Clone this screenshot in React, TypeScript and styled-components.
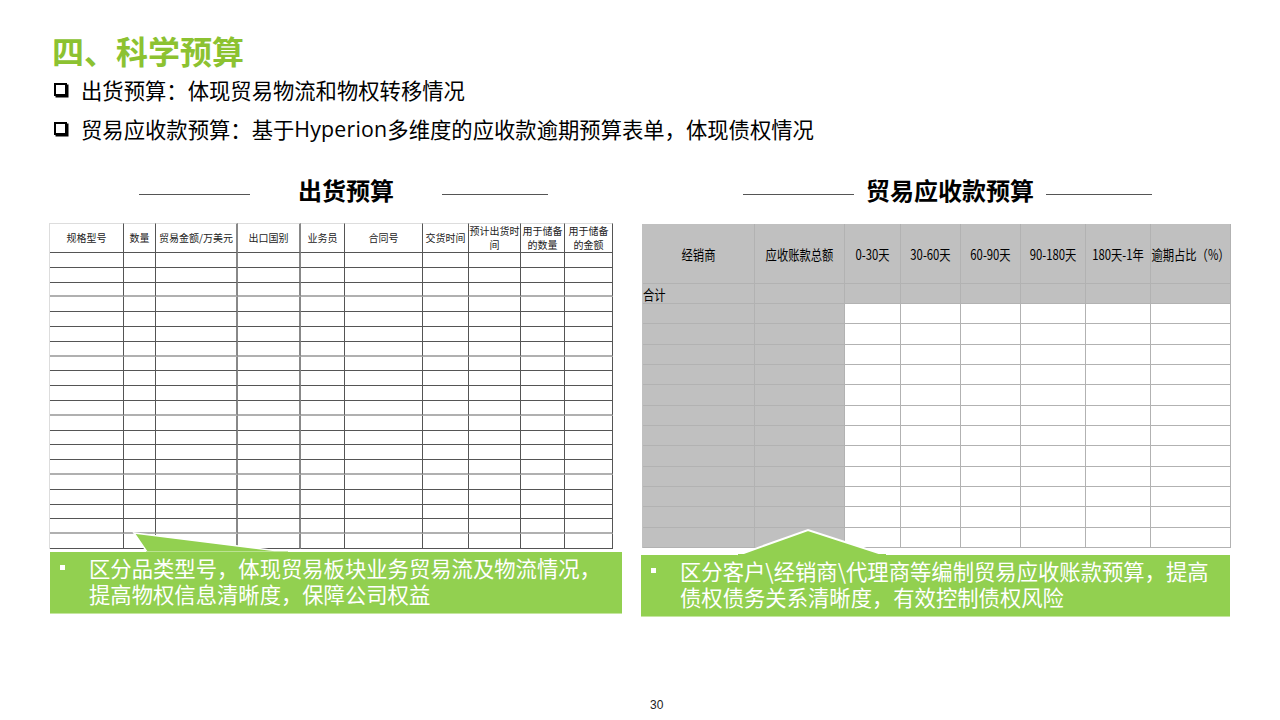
import React, { ReactElement } from 'react';
import styled, { createGlobalStyle } from 'styled-components';

const GlobalStyle = createGlobalStyle`
  html, body { margin: 0; padding: 0; background: #fff; }
  body { font-family: "Noto Sans CJK SC", "Liberation Sans", sans-serif; }
`;

const Slide = styled.div`
  width: 1280px;
  height: 720px;
  overflow: hidden;
  display: flex;
  flex-direction: column;
  padding: 30px 0 0 0;
  box-sizing: border-box;
`;

const Title = styled.h1`
  margin: 0 0 0 52px;
  height: 40px;
  font-size: 32px;
  line-height: 40px;
  font-weight: 700;
  color: #8cc231;
`;

const BulletList = styled.ul`
  list-style: none;
  margin: 0 0 0 54px;
  padding: 0;
`;

const BulletItem = styled.li`
  display: flex;
  align-items: center;
  height: 39px;
  line-height: 30px;
  font-size: 21.33px;
  color: #000;
  white-space: nowrap;
`;

const Latin = styled.span`
  font-family: "Open Sans", "Liberation Sans", sans-serif;
  letter-spacing: 0.2px;
`;

const BulletBox = styled.span`
  width: 9px;
  height: 9px;
  border: 2px solid #000;
  box-shadow: 1.5px 1.5px 0 #000;
  margin-right: 14px;
  flex: none;
`;

const Panels = styled.div`
  display: flex;
  margin-top: 17px;
`;

const Panel = styled.section<{ $left: number; $width: number }>`
  margin-left: ${p => p.$left}px;
  width: ${p => p.$width}px;
  flex: none;
`;

const PanelHead = styled.div<{ $pad: number; $after: number }>`
  display: flex;
  align-items: center;
  height: 50px;
  padding-left: ${p => p.$pad}px;
  margin-bottom: ${p => p.$after}px;
`;

const HeadLine = styled.span<{ $w: number }>`
  width: ${p => p.$w}px;
  height: 1px;
  background: #555;
  flex: none;
  margin-top: 9px;
`;

const HeadText = styled.h2<{ $w: number }>`
  margin: 0;
  width: ${p => p.$w}px;
  flex: none;
  text-align: center;
  font-size: 24px;
  line-height: 32px;
  font-weight: 700;
  color: #000;
`;

const Sheet = styled.div<{ $cols: string; $rows: string; $line: string }>`
  display: grid;
  grid-template-columns: ${p => p.$cols};
  grid-template-rows: ${p => p.$rows};
  border-left: 1px solid ${p => p.$line};
`;

const ShipCell = styled.div<{ $soft?: boolean; $head?: boolean; $wideRight?: boolean }>`
  border-right: ${p => (p.$wideRight ? '2px solid #888' : '1px solid #555')};
  border-bottom: ${p => (p.$soft ? '2px solid #b0b0b0' : '1px solid #555')};
  border-top: ${p => (p.$head ? '1px solid #ddd' : 'none')};
  display: flex;
  align-items: center;
  justify-content: center;
  text-align: center;
  font-size: 10px;
  line-height: 14px;
  color: #222;
  box-sizing: border-box;
  min-width: 0;
  min-height: 0;
`;

const DebtCell = styled.div<{ $grey?: boolean; $start?: boolean }>`
  background: ${p => (p.$grey ? '#c0c0c0' : '#fff')};
  border-right: 1px solid #b2b2b2;
  border-bottom: 1px solid #b2b2b2;
  display: flex;
  align-items: center;
  justify-content: ${p => (p.$start ? 'flex-start' : 'center')};
  font-size: 11.3px;
  color: #000;
  white-space: nowrap;
  box-sizing: border-box;
  min-width: 0;
  min-height: 0;
`;

const DebtLabel = styled.span`
  display: inline-block;
  transform: scaleY(1.25);
`;

const Callout = styled.div<{ $top: number; $left: number; $width: number }>`
  position: relative;
  margin-top: ${p => p.$top}px;
  margin-left: ${p => p.$left}px;
  width: ${p => p.$width}px;
  height: 62px;
  box-sizing: border-box;
  padding: 3px 8px 0 39px;
  background: #92d050;
  border-bottom: 1px solid #c5e6a0;
  color: #fff;
  font-size: 21.33px;
  line-height: 26px;
`;

const CalloutDot = styled.span`
  position: absolute;
  left: 10px;
  top: 13px;
  width: 5px;
  height: 5px;
  background: #fff;
`;

const Pointer = styled.svg<{ $x: number; $y: number }>`
  position: absolute;
  left: ${p => p.$x}px;
  top: ${p => p.$y}px;
  overflow: visible;
`;

const PageNo = styled.div`
  position: absolute;
  left: 650px;
  top: 697px;
  font-family: "Liberation Sans", sans-serif;
  font-size: 12px;
  line-height: 16px;
  color: #222;
`;

const shipHeads = ['规格型号', '数量', '贸易金额/万美元', '出口国别', '业务员', '合同号', '交货时间', '预计出货时间', '用于储备的数量', '用于储备的金额'];
const shipCols = '74px 32px 82px 63px 44px 78px 46px 52px 44px 48px';
const debtHeads = ['经销商', '应收账款总额', '0-30天', '30-60天', '60-90天', '90-180天', '180天-1年', '逾期占比（%）'];
const debtCols = '112px 90px 56px 60px 60px 65px 65px 80px';

const softRows = [2, 6, 10, 14, 18];

const App = (): ReactElement => {
  return (
    <>
      <GlobalStyle />
      <Slide>
        <Title>四、科学预算</Title>
        <BulletList>
          <BulletItem><BulletBox />出货预算：体现贸易物流和物权转移情况</BulletItem>
          <BulletItem><BulletBox />贸易应收款预算：基于<Latin>Hyperion</Latin>多维度的应收款逾期预算表单，体现债权情况</BulletItem>
        </BulletList>
        <Panels>
          <Panel $left={49} $width={574}>
            <PanelHead $pad={90} $after={8}>
              <HeadLine $w={111} />
              <HeadText $w={192}>出货预算</HeadText>
              <HeadLine $w={106} />
            </PanelHead>
            <Sheet $cols={shipCols} $rows="30px repeat(20, 14.8px)" $line="#ddd">
              {shipHeads.map((h, i) => <ShipCell key={h} $head $wideRight={i === 2 || i === 3}>{h}</ShipCell>)}
              {Array.from({ length: 20 }).flatMap((_, r) =>
                shipHeads.map((h, i) => (
                  <ShipCell key={`${r}-${h}`} $soft={softRows.includes(r)} $wideRight={i === 2 || i === 3} />
                ))
              )}
            </Sheet>
            <Callout $top={3} $left={1} $width={572}>
              <Pointer $x={84} $y={-19} width="155" height="21" viewBox="0 0 155 21">
                <polygon points="0,0 13,19 153,19" fill="#92d050" stroke="#fff" strokeWidth="1.5" />
                <rect x="12" y="18.5" width="142" height="2" fill="#92d050" />
              </Pointer>
              <CalloutDot />
              区分品类型号，体现贸易板块业务贸易流及物流情况，<br />提高物权信息清晰度，保障公司权益
            </Callout>
          </Panel>
          <Panel $left={19} $width={590}>
            <PanelHead $pad={101} $after={9}>
              <HeadLine $w={111} />
              <HeadText $w={192}>贸易应收款预算</HeadText>
              <HeadLine $w={106} />
            </PanelHead>
            <Sheet $cols={debtCols} $rows="60px 20px repeat(12, 20.33px)" $line="#c0c0c0">
              {debtHeads.map(h => <DebtCell key={h} $grey><DebtLabel>{h}</DebtLabel></DebtCell>)}
              {debtHeads.map((h, i) => (
                <DebtCell key={`sum-${h}`} $grey $start={i === 0}>
                  {i === 0 ? <DebtLabel>合计</DebtLabel> : ''}
                </DebtCell>
              ))}
              {Array.from({ length: 12 }).flatMap((_, r) =>
                debtHeads.map((h, i) => <DebtCell key={`${r}-${h}`} $grey={i < 2} />)
              )}
            </Sheet>
            <Callout $top={7} $left={-1} $width={589}>
              <Pointer $x={97} $y={-25} width="150" height="26" viewBox="0 0 150 26">
                <polygon points="0,25 70,0 147,25" fill="#92d050" stroke="#fff" strokeWidth="2" />
                <rect x="0" y="24" width="148" height="3" fill="#92d050" />
              </Pointer>
              <CalloutDot />
              区分客户\经销商\代理商等编制贸易应收账款预算，提高<br />债权债务关系清晰度，有效控制债权风险
            </Callout>
          </Panel>
        </Panels>
        <PageNo>30</PageNo>
      </Slide>
    </>
  );
};

export default App;
